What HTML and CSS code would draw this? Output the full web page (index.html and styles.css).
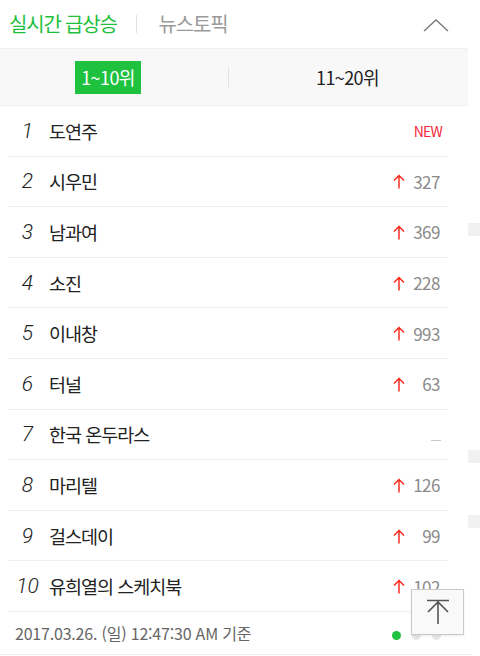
FILE: index.html
```html
<!DOCTYPE html>
<html lang="ko">
<head>
<meta charset="utf-8">
<title>실시간 급상승</title>
<link rel="stylesheet" href="styles.css">
</head>
<body>
<div class="page">
  <header class="head">
    <span class="title on">실시간 급상승</span>
    <span class="bar"></span>
    <span class="title off">뉴스토픽</span>
    <svg class="fold" width="26" height="14" viewBox="0 0 26 14"><polyline points="1,13 13,2 25,13" fill="none" stroke="#777" stroke-width="1.3"/></svg>
  </header>
  <nav class="tabs">
    <div class="tab left"><span class="badge">1~10위</span></div>
    <span class="tabsep"></span>
    <div class="tab right"><span class="tabtext">11~20위</span></div>
  </nav>
  <ul class="list">
    <li class="row"><span class="rank">1</span><span class="name">도연주</span><span class="new">NEW</span></li>
    <li class="row"><span class="rank">2</span><span class="name">시우민</span><span class="up"><svg width="12" height="15" viewBox="0 0 12 15"><path d="M6 1.5V14.5M1 6.5L6 1.5L11 6.5" fill="none" stroke="#f21" stroke-width="1.4"/></svg></span><span class="num">327</span></li>
    <li class="row"><span class="rank">3</span><span class="name">남과여</span><span class="up"><svg width="12" height="15" viewBox="0 0 12 15"><path d="M6 1.5V14.5M1 6.5L6 1.5L11 6.5" fill="none" stroke="#f21" stroke-width="1.4"/></svg></span><span class="num">369</span></li>
    <li class="row"><span class="rank">4</span><span class="name">소진</span><span class="up"><svg width="12" height="15" viewBox="0 0 12 15"><path d="M6 1.5V14.5M1 6.5L6 1.5L11 6.5" fill="none" stroke="#f21" stroke-width="1.4"/></svg></span><span class="num">228</span></li>
    <li class="row"><span class="rank">5</span><span class="name">이내창</span><span class="up"><svg width="12" height="15" viewBox="0 0 12 15"><path d="M6 1.5V14.5M1 6.5L6 1.5L11 6.5" fill="none" stroke="#f21" stroke-width="1.4"/></svg></span><span class="num">993</span></li>
    <li class="row"><span class="rank">6</span><span class="name">터널</span><span class="up"><svg width="12" height="15" viewBox="0 0 12 15"><path d="M6 1.5V14.5M1 6.5L6 1.5L11 6.5" fill="none" stroke="#f21" stroke-width="1.4"/></svg></span><span class="num">63</span></li>
    <li class="row"><span class="rank">7</span><span class="name">한국 온두라스</span><span class="same"></span></li>
    <li class="row"><span class="rank">8</span><span class="name">마리텔</span><span class="up"><svg width="12" height="15" viewBox="0 0 12 15"><path d="M6 1.5V14.5M1 6.5L6 1.5L11 6.5" fill="none" stroke="#f21" stroke-width="1.4"/></svg></span><span class="num">126</span></li>
    <li class="row"><span class="rank">9</span><span class="name">걸스데이</span><span class="up"><svg width="12" height="15" viewBox="0 0 12 15"><path d="M6 1.5V14.5M1 6.5L6 1.5L11 6.5" fill="none" stroke="#f21" stroke-width="1.4"/></svg></span><span class="num">99</span></li>
    <li class="row"><span class="rank">10</span><span class="name">유희열의 스케치북</span><span class="up"><svg width="12" height="15" viewBox="0 0 12 15"><path d="M6 1.5V14.5M1 6.5L6 1.5L11 6.5" fill="none" stroke="#f21" stroke-width="1.4"/></svg></span><span class="num">102</span></li>
  </ul>
  <footer class="foot">
    <span class="date">2017.03.26. (일) 12:47:30 AM 기준</span>
    <span class="dots"><i class="dot active"></i><i class="dot"></i><i class="dot"></i></span>
  </footer>
  <span class="peek p1"></span>
  <span class="peek p2"></span>
  <span class="peek p3"></span>
  <button class="totop" type="button" aria-label="맨 위로">
    <svg width="26" height="26" viewBox="0 0 26 26"><path d="M2 1.5H24M13 3V25M3 13L13 3L23 13" fill="none" stroke="#555" stroke-width="1.6"/></svg>
  </button>
</div>
</body>
</html>
```

FILE: styles.css
```css
* { box-sizing: border-box; }
html, body { margin: 0; padding: 0; background: #fff; }
body { font-family: "Noto Sans CJK KR", "Noto Sans", sans-serif; color: #222; }
.page { position: relative; width: 480px; height: 656px; overflow: hidden; }

.head { height: 48px; display: flex; align-items: center; padding-left: 9px; width: 468px; }
.title { font-size: 20px; letter-spacing: -1.2px; line-height: 1; }
.title.on { color: #1fbf3e; }
.title.off { color: #9a9a9a; }
.bar { width: 1px; height: 18px; background: #e2e2e2; margin: 0 22px 0 19px; }
.fold { margin-left: auto; margin-right: 19px; margin-top: 1px; }

.tabs { width: 468px; height: 58px; background: #f8f8f8; border-top: 1px solid #f0f0f0; border-bottom: 1px solid #f0f0f0; display: flex; align-items: center; }
.tab { display: flex; justify-content: center; align-items: center; }
.tab.left { width: 228px; padding-right: 12px; }
.tab.right { flex: 1; padding-right: 2px; }
.tabsep { width: 1px; height: 20px; background: #dde4e6; }
.badge { background: #1fc23f; color: #fff; font-size: 18px; letter-spacing: -0.6px; height: 33px; line-height: 33px; padding: 0 6px; }
.tabtext { font-size: 18px; letter-spacing: -0.6px; color: #222; }

.list { list-style: none; margin: 0; padding: 0; }
.row { margin: 0 32px 0 8px; height: 50.6px; border-bottom: 1px solid #efefef; display: flex; align-items: center; padding-right: 8px; }
.rank { width: 40px; text-align: center; font-family: Roboto, "Noto Sans", sans-serif; font-style: italic; font-weight: 300; font-size: 21px; color: #222; padding-right: 1px; }
.name { margin-left: 1px; font-size: 18.5px; letter-spacing: -1px; color: #222; flex: 1; }
.new { font-size: 14px; color: #f3273a; letter-spacing: -0.8px; margin-right: -2px; }
.up { width: 17px; display: flex; align-items: center; margin-top: 1px; }
.num { width: 30px; text-align: right; font-size: 17px; color: #8a8a8a; letter-spacing: -0.5px; }
.same { width: 10px; height: 1px; background: #c8c8c8; margin-top: 12px; margin-right: -1px; }

.foot { height: 43px; margin-right: 8px; border-bottom: 1px solid #efefef; display: flex; align-items: center; padding-left: 15px; }
.date { font-size: 16px; color: #666; letter-spacing: -0.2px; }
.dots { margin-left: auto; margin-right: 31px; display: flex; gap: 11px; margin-top: 6px; }
.dot { display: block; width: 9px; height: 9px; border-radius: 50%; background: #e6e6e6; }
.dot.active { background: #1fc23f; }

.peek { position: absolute; left: 468px; width: 12px; height: 13px; background: #f1f1f1; }
.p1 { top: 223px; }
.p2 { top: 450px; }
.p3 { top: 515px; }

.totop { position: absolute; left: 411px; top: 589px; width: 53px; height: 46px; background: #f9f9f9; border: 1px solid #c9c9c9; box-shadow: 0 1px 2px rgba(0,0,0,0.08); padding: 0; display: flex; justify-content: center; align-items: center; }
.totop svg { margin-left: 1px; }
```
